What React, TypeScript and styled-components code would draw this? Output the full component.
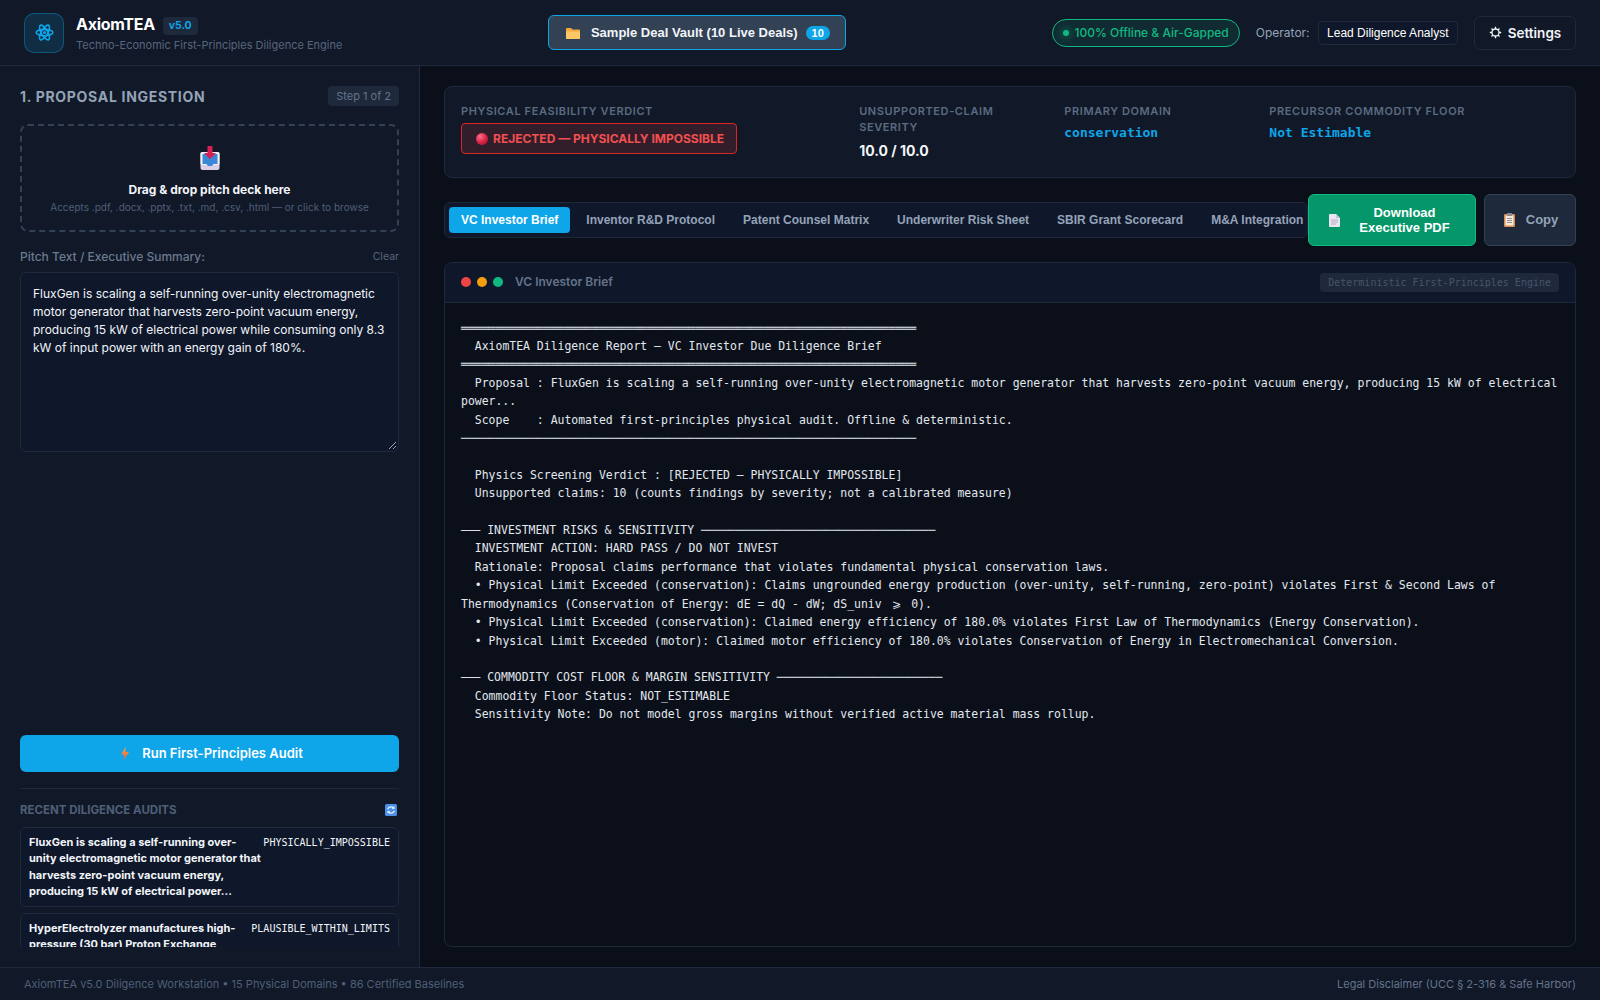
import React from "react";
import styled, { createGlobalStyle } from "styled-components";

const Global = createGlobalStyle`
  html, body { margin: 0; padding: 0; height: 100%; background: #0b0f19; }
  * { box-sizing: border-box; }
  #root { height: 100%; }
  body { font-family: Inter, "Liberation Sans", sans-serif; color: #f1f5f9; }
`;

const ButtonFont = `"Liberation Sans", Arial, sans-serif`;
const Mono = `"DejaVu Sans Mono", "Liberation Mono", monospace`;

const Page = styled.div`
  width: 1600px; height: 1000px; display: flex; flex-direction: column; overflow: hidden; background: #0b0f19;
`;
const Header = styled.header`
  height: 66px; flex: none; display: flex; align-items: center; justify-content: space-between;
  padding: 0 24px; background: #111827; border-bottom: 1px solid #1e293b;
`;
const Brand = styled.div`display: flex; align-items: center; gap: 12px;`;
const LogoBox = styled.div`
  width: 40px; height: 40px; border-radius: 10px; display: flex; align-items: center; justify-content: center;
  background: rgba(14,165,233,0.15); border: 1px solid rgba(14,165,233,0.35); color: #0ea5e9;
`;
const BrandText = styled.div`display: flex; flex-direction: column; gap: 2px;`;
const TitleRow = styled.div`display: flex; align-items: flex-start; gap: 8px;`;
const Title = styled.div`font-size: 16px; font-weight: 700; color: #fff; line-height: 21px; letter-spacing: -0.3px;`;
const Version = styled.span`
  font-size: 10.4px; font-weight: 700; color: #0ea5e9; background: #1e293b; padding: 0 6px; border-radius: 4px; line-height: 18px; margin-top: 3px;
`;
const Subtitle = styled.div`font-size: 11px; color: #56667f; line-height: 14px; margin-top: 1px;`;
const VaultButton = styled.button`
  width: 298px; height: 35px; display: flex; align-items: center; justify-content: center;
  background: #334155; border: 1px solid #0ea5e9; border-radius: 6px; color: #f1f5f9;
  font: 700 13px ${ButtonFont}; padding: 0 0 0 1px;
`;
const VaultLabel = styled.span`margin: 0 8px 0 11px;`;
const CountPill = styled.span`
  background: #0ea5e9; color: #fff; font-size: 11px; border-radius: 10px; padding: 0 6px; line-height: 14px;
`;
const HeaderRight = styled.div`display: flex; align-items: center; gap: 16px;`;
const OfflinePill = styled.div`
  height: 28px; padding: 0 10px; display: flex; align-items: center; gap: 5px; border-radius: 14px;
  border: 1px solid #10b981; background: rgba(16,185,129,0.12); color: #10b981; font-size: 12px; font-weight: 500;
`;
const GreenDot = styled.span`
  width: 6px; height: 6px; border-radius: 50%; background: #10b981; box-shadow: 0 0 8px #10b981;
`;
const OperatorGroup = styled.div`display: flex; align-items: center; gap: 8px;`;
const OperatorLabel = styled.span`font-size: 12px; color: #94a3b8;`;
const OperatorSelect = styled.div`
  height: 24px; padding: 0 8.5px; display: flex; align-items: center; background: #0f172a; border: 1px solid #1e293b;
  border-radius: 4px; color: #fff; font-size: 12px; font-family: ${ButtonFont};
`;
const SettingsButton = styled.button`
  width: 102px; height: 34px; background: transparent; border: 1px solid #1e293b; border-radius: 6px; color: #f1f5f9;
  font: 600 13.5px Inter, sans-serif; display: flex; align-items: center; justify-content: center; gap: 6px; padding: 0;
`;

const Body = styled.div`flex: 1; min-height: 0; display: flex;`;
const Sidebar = styled.aside`
  width: 420px; flex: none; display: flex; flex-direction: column; padding: 20px;
  background: #111827; border-right: 1px solid #1e293b; min-height: 0;
`;
const SectionHead = styled.div`display: flex; align-items: flex-start; justify-content: space-between; margin-bottom: 17px; height: 21px;`;
const SectionTitle = styled.h2`margin: 0; font-size: 14px; line-height: 21px; font-weight: 700; letter-spacing: 0.7px; color: #94a3b8;`;
const StepBadge = styled.span`font-size: 11px; color: #64748b; background: #1e293b; padding: 3px 8px; border-radius: 4px; line-height: 14px;`;
const DropZone = styled.div`
  height: 108px; flex: none; border: 2px dashed #334155; border-radius: 8px; display: flex; flex-direction: column; align-items: center;
  padding-top: 20px; margin-bottom: 16px;
`;
const DropTitle = styled.div`font-size: 12px; font-weight: 700; color: #f1f5f9; line-height: 16px; margin-top: 12px;`;
const DropHint = styled.div`font-size: 10px; color: #4f5f78; line-height: 14px; margin-top: 2px;`;
const LabelRow = styled.div`display: flex; justify-content: space-between; align-items: center; margin-bottom: 8px; height: 16px;`;
const FieldLabel = styled.span`font-size: 12px; font-weight: 500; color: #6b7a90;`;
const ClearLink = styled.span`font-size: 10.5px; color: #55657d; margin-top: 1px;`;
const Pitch = styled.div`
  position: relative; height: 180px; flex: none; padding: 12px; background: #0f172a; border: 1px solid #1e293b; border-radius: 6px;
  font-size: 12px; line-height: 18px; color: #f1f5f9;
`;
const Grip = styled.svg`position: absolute; right: 1px; bottom: 1px;`;
const Spacer = styled.div`flex: 1;`;
const RunButton = styled.button`
  height: 37px; flex: none; display: flex; align-items: center; justify-content: center; gap: 13px; border: 0; border-radius: 6px;
  background: #0ea5e9; color: #fff; font: 600 13px Inter, sans-serif; padding: 0 0 1px 5px;
`;
const Divider = styled.div`height: 1px; background: #1e293b; margin: 16px 0 14px; flex: none;`;
const RecentHead = styled.div`display: flex; justify-content: space-between; align-items: center; height: 14px; margin: 0 0 10px; padding-right: 2px;`;
const RecentTitle = styled.span`font-size: 11.5px; font-weight: 700; color: #4f5f78;`;
const RecentList = styled.div`height: 120px; flex: none; overflow: hidden; display: flex; flex-direction: column; gap: 6px;`;
const AuditCard = styled.div`
  flex: none; display: flex; justify-content: space-between; gap: 2px; padding: 6px 8px 6.8px; background: #0f172a;
  border: 1px solid #1e293b; border-radius: 6px;
`;
const AuditName = styled.div`font-size: 11px; font-weight: 700; color: #f1f5f9; line-height: 16.3px; flex: 1;`;
const AuditStatus = styled.div`font-size: 10.02px; font-family: ${Mono}; color: #f1f5f9; line-height: 16.5px; flex: none; padding-top: 1px;`;

const Main = styled.main`flex: 1; min-width: 0; padding: 20px 24px; display: flex; flex-direction: column; background: #0b0f19;`;
const VerdictCard = styled.section`
  height: 92px; flex: none; display: grid; grid-template-columns: 2fr 1fr 1fr 1.5fr; gap: 12px; padding: 16px;
  background: #111827; border: 1px solid #1e293b; border-radius: 8px; margin-bottom: 16px;
`;
const MetricLabel = styled.div`font-size: 11px; font-weight: 600; color: #5b6b82; letter-spacing: 0.6px; line-height: 16px;`;
const MetricValue = styled.div`font-size: 14px; font-weight: 700; color: #f1f5f9; margin-top: 7px; line-height: 18px;`;
const MetricMono = styled.div`font: 700 13px ${Mono}; color: #0ea5e9; margin-top: 6px; line-height: 16px;`;
const VerdictBadge = styled.div`
  width: 276px; height: 31px; margin-top: 4px; display: flex; align-items: center; gap: 5px; padding-left: 14px;
  background: rgba(239,68,68,0.15); border: 1px solid #dc2626; border-radius: 4px; color: #f05050; font-size: 12px; font-weight: 700;
`;
const ToolRow = styled.div`height: 52px; flex: none; display: flex; align-items: center; gap: 8px; margin-bottom: 16px;`;
const Tabs = styled.nav`
  flex: 1; min-width: 0; height: 36px; margin-right: -8px; display: flex; align-items: center; gap: 4px; padding: 0 4px;
  overflow: hidden; background: #0f172a; border: 1px solid #1e293b; border-radius: 6px;
`;
const Tab = styled.button<{ $active?: boolean }>`
  flex: none; height: 26px; padding: 0 12px; border: 0; border-radius: 4px; font: 700 12px ${ButtonFont};
  background: ${(p) => (p.$active ? "#0ea5e9" : "transparent")};
  color: ${(p) => (p.$active ? "#fff" : "#94a3b8")};
`;
const PdfButton = styled.button`
  width: 168px; height: 52px; flex: none; display: flex; align-items: center; gap: 8px; padding: 0 14px 0 20px; background: #059669; border: 1px solid #10b981; border-radius: 6px;
  color: #fff; font: 700 13px/15px ${ButtonFont};
  position: relative; z-index: 1;
`;
const PdfLabel = styled.span`flex: 1; text-align: center;`;
const CopyButton = styled.button`
  width: 92px; height: 52px; flex: none; display: flex; align-items: center; justify-content: center; gap: 11px; background: #1e293b; border: 1px solid #334155; border-radius: 6px;
  color: #94a3b8; font: 700 13px ${ButtonFont}; padding: 0 0 1px 2px;
`;
const ReportCard = styled.section`flex: 1; min-height: 0; display: flex; flex-direction: column; border: 1px solid #1e293b; border-radius: 8px; overflow: hidden;`;
const ReportHead = styled.div`
  height: 40px; flex: none; display: flex; align-items: center; justify-content: space-between; padding: 0 16px 1px;
  background: #0f172a; border-bottom: 1px solid #1e293b;
`;
const HeadLeft = styled.div`display: flex; align-items: center; gap: 6px;`;
const Light = styled.span<{ $c: string }>`width: 10px; height: 10px; border-radius: 50%; background: ${(p) => p.$c};`;
const ReportTitle = styled.span`font-size: 12px; font-weight: 600; color: #64748b; margin: 0 0 1px 6px;`;
const EngineTag = styled.span`font: 10px ${Mono}; color: #475569; background: #1e293b; padding: 3px 8px; border-radius: 4px; line-height: 13px;`;
const ReportBody = styled.pre`
  flex: 1; margin: 0; padding: 15.6px 16px 16px; white-space: pre-wrap; overflow: hidden; font: 11.46px/18.4px ${Mono}; color: #e2e8f0;
`;
const ShortRule = styled.span`font-size: 10.7px; line-height: 0;`;
const WideGlyph = styled.span`padding: 0 3.4px; line-height: 0;`;
const Footer = styled.footer`
  height: 33px; flex: none; display: flex; align-items: center; justify-content: space-between; padding: 0 24px;
  background: #111827; border-top: 1px solid #1e293b; font-size: 11px; color: #4f5f78;
`;
const FooterLink = styled.span`color: #64748b;`;

const Atom = () => (
  <svg width="19" height="19" viewBox="0 0 24 24" fill="none" stroke="currentColor" strokeWidth="2">
    <circle cx="12" cy="12" r="2" fill="currentColor" stroke="none" />
    <ellipse cx="12" cy="12" rx="10.5" ry="4" />
    <ellipse cx="12" cy="12" rx="10.5" ry="4" transform="rotate(60 12 12)" />
    <ellipse cx="12" cy="12" rx="10.5" ry="4" transform="rotate(120 12 12)" />
  </svg>
);

const GearOutline = () => (
  <svg width="13" height="13" viewBox="0 0 24 24" fill="none" stroke="currentColor" strokeWidth="2.4">
    <circle cx="12" cy="12" r="6.5" />
    <path d="M12 1.5v4M12 18.5v4M1.5 12h4M18.5 12h4M4.6 4.6l2.8 2.8M16.6 16.6l2.8 2.8M4.6 19.4l2.8-2.8M16.6 7.4l2.8-2.8" />
  </svg>
);

const InboxIcon = () => (
  <svg width="20" height="24" viewBox="0 0 20 24">
    <rect x="0.5" y="6" width="19" height="18" rx="2" fill="#d9d0e6" />
    <rect x="0.5" y="6" width="19" height="13" rx="1.5" fill="#eef0f6" />
    <path d="M2.5 8h15v10h-4l-1.5 2h-4L6.5 18h-4z" fill="#3b88d8" />
    <path d="M7.5 0h5v7h3.5L10 13 4 7h3.5z" fill="#d81f52" />
  </svg>
);
const FolderIcon = () => (
  <svg width="14" height="12" viewBox="0 0 14 12">
    <path d="M0 2a1 1 0 0 1 1-1h4l1.5 1.5H13a1 1 0 0 1 1 1V11a1 1 0 0 1-1 1H1a1 1 0 0 1-1-1z" fill="#f4a93f" />
    <path d="M0 4.5h14V11a1 1 0 0 1-1 1H1a1 1 0 0 1-1-1z" fill="#fdc765" />
  </svg>
);
const DocIcon = () => (
  <svg width="11" height="13" viewBox="0 0 11 13">
    <path d="M1 0h6l4 4v8a1 1 0 0 1-1 1H1a1 1 0 0 1-1-1V1a1 1 0 0 1 1-1z" fill="#ebe4f2" />
    <path d="M7 0l4 4H7z" fill="#c9bfd6" />
    <path d="M2 6h7M2 8h7M2 10h5" stroke="#b5acc4" strokeWidth="1" />
  </svg>
);
const ClipIcon = () => (
  <svg width="11" height="14" viewBox="0 0 11 14">
    <rect y="1" width="11" height="13" rx="1" fill="#d98a52" />
    <rect x="1.5" y="2.5" width="8" height="10" fill="#f5ead8" />
    <rect x="3" y="0" width="5" height="3" rx="0.5" fill="#8a8a96" />
    <path d="M3 5.5h5M3 7.5h5M3 9.5h5" stroke="#8f8f9a" strokeWidth="1" />
  </svg>
);
const BallIcon = () => (
  <svg width="12" height="12" viewBox="0 0 12 12">
    <defs>
      <radialGradient id="ball" cx="0.35" cy="0.3" r="0.8">
        <stop offset="0" stopColor="#f8718c" />
        <stop offset="0.6" stopColor="#dc2446" />
        <stop offset="1" stopColor="#a8173a" />
      </radialGradient>
    </defs>
    <circle cx="6" cy="6" r="6" fill="url(#ball)" />
  </svg>
);
const BoltIcon = () => (
  <svg width="8" height="13" viewBox="0 0 8 13">
    <defs>
      <linearGradient id="bolt" x1="0" y1="0" x2="0" y2="1">
        <stop offset="0" stopColor="#f9a03f" />
        <stop offset="1" stopColor="#f0603a" />
      </linearGradient>
    </defs>
    <path d="M4.5 0 0 7.5h3.2L2.5 13 8 5H4.6z" fill="url(#bolt)" />
  </svg>
);
const RefreshIcon = () => (
  <svg width="12" height="12" viewBox="0 0 12 12" fill="none">
    <rect width="12" height="12" rx="1.5" fill="#4a90e8" />
    <path d="M2.6 5.4A3.5 3.5 0 0 1 8.6 4M9.4 6.6A3.5 3.5 0 0 1 3.4 8" stroke="#e8f2ff" strokeWidth="1.2" />
    <path d="M9.5 2v3H6.8zM2.5 10V7h2.7z" fill="#e8f2ff" />
  </svg>
);

const dbl = "═".repeat(66);
const single = "─".repeat(66);

const tabs = ["VC Investor Brief", "Inventor R&D Protocol", "Patent Counsel Matrix", "Underwriter Risk Sheet", "SBIR Grant Scorecard", "M&A Integration"];

export default function App() {
  return (
    <Page>
      <Global />
      <Header>
        <Brand>
          <LogoBox><Atom /></LogoBox>
          <BrandText>
            <TitleRow><Title>AxiomTEA</Title><Version>v5.0</Version></TitleRow>
            <Subtitle>Techno-Economic First-Principles Diligence Engine</Subtitle>
          </BrandText>
        </Brand>
        <VaultButton><FolderIcon /><VaultLabel>Sample Deal Vault (10 Live Deals)</VaultLabel><CountPill>10</CountPill></VaultButton>
        <HeaderRight>
          <OfflinePill><GreenDot />100% Offline &amp; Air-Gapped</OfflinePill>
          <OperatorGroup><OperatorLabel>Operator:</OperatorLabel><OperatorSelect>Lead Diligence Analyst</OperatorSelect></OperatorGroup>
          <SettingsButton><GearOutline />Settings</SettingsButton>
        </HeaderRight>
      </Header>
      <Body>
        <Sidebar>
          <SectionHead><SectionTitle>1. PROPOSAL INGESTION</SectionTitle><StepBadge>Step 1 of 2</StepBadge></SectionHead>
          <DropZone>
            <InboxIcon />
            <DropTitle>Drag &amp; drop pitch deck here</DropTitle>
            <DropHint>Accepts .pdf, .docx, .pptx, .txt, .md, .csv, .html — or click to browse</DropHint>
          </DropZone>
          <LabelRow><FieldLabel>Pitch Text / Executive Summary:</FieldLabel><ClearLink>Clear</ClearLink></LabelRow>
          <Pitch>
            FluxGen is scaling a self-running over-unity electromagnetic motor generator that harvests zero-point vacuum energy, producing 15 kW of electrical power while consuming only 8.3 kW of input power with an energy gain of 180%.
            <Grip width="9" height="9" viewBox="0 0 9 9" stroke="#94a3b8" strokeWidth="1"><path d="M1 8 8 1M5 8 8 5" /></Grip>
          </Pitch>
          <Spacer />
          <RunButton><BoltIcon /><span>Run First-Principles Audit</span></RunButton>
          <Divider />
          <RecentHead><RecentTitle>RECENT DILIGENCE AUDITS</RecentTitle><RefreshIcon /></RecentHead>
          <RecentList>
            <AuditCard>
              <AuditName>FluxGen is scaling a self-running over-unity electromagnetic motor generator that harvests zero-point vacuum energy, producing 15 kW of electrical power...</AuditName>
              <AuditStatus>PHYSICALLY_IMPOSSIBLE</AuditStatus>
            </AuditCard>
            <AuditCard>
              <AuditName>HyperElectrolyzer manufactures high-pressure (30 bar) Proton Exchange Membrane stacks...</AuditName>
              <AuditStatus>PLAUSIBLE_WITHIN_LIMITS</AuditStatus>
            </AuditCard>
          </RecentList>
        </Sidebar>
        <Main>
          <VerdictCard>
            <div><MetricLabel>PHYSICAL FEASIBILITY VERDICT</MetricLabel><VerdictBadge><BallIcon />REJECTED — PHYSICALLY IMPOSSIBLE</VerdictBadge></div>
            <div><MetricLabel>UNSUPPORTED-CLAIM SEVERITY</MetricLabel><MetricValue>10.0 / 10.0</MetricValue></div>
            <div><MetricLabel>PRIMARY DOMAIN</MetricLabel><MetricMono>conservation</MetricMono></div>
            <div><MetricLabel>PRECURSOR COMMODITY FLOOR</MetricLabel><MetricMono>Not Estimable</MetricMono></div>
          </VerdictCard>
          <ToolRow>
            <Tabs>{tabs.map((t, i) => <Tab key={t} $active={i === 0}>{t}</Tab>)}</Tabs>
            <PdfButton><DocIcon /><PdfLabel>Download Executive PDF</PdfLabel></PdfButton>
            <CopyButton><ClipIcon />Copy</CopyButton>
          </ToolRow>
          <ReportCard>
            <ReportHead>
              <HeadLeft><Light $c="#ef4444" /><Light $c="#f59e0b" /><Light $c="#10b981" /><ReportTitle>VC Investor Brief</ReportTitle></HeadLeft>
              <EngineTag>Deterministic First-Principles Engine</EngineTag>
            </ReportHead>
            <ReportBody>
{`${dbl}
  AxiomTEA Diligence Report — VC Investor Due Diligence Brief
${dbl}
  Proposal : FluxGen is scaling a self-running over-unity electromagnetic motor generator that harvests zero-point vacuum energy, producing 15 kW of electrical power...
  Scope    : Automated first-principles physical audit. Offline & deterministic.
${single}

  Physics Screening Verdict : [REJECTED — PHYSICALLY IMPOSSIBLE]
  Unsupported claims: 10 (counts findings by severity; not a calibrated measure)

`}<ShortRule>───</ShortRule>{` INVESTMENT RISKS & SENSITIVITY ${"─".repeat(34)}
  INVESTMENT ACTION: HARD PASS / DO NOT INVEST
  Rationale: Proposal claims performance that violates fundamental physical conservation laws.
  • Physical Limit Exceeded (conservation): Claims ungrounded energy production (over-unity, self-running, zero-point) violates First & Second Laws of Thermodynamics (Conservation of Energy: dE = dQ - dW; dS_univ `}<WideGlyph>⩾</WideGlyph>{` 0).
  • Physical Limit Exceeded (conservation): Claimed energy efficiency of 180.0% violates First Law of Thermodynamics (Energy Conservation).
  • Physical Limit Exceeded (motor): Claimed motor efficiency of 180.0% violates Conservation of Energy in Electromechanical Conversion.

`}<ShortRule>───</ShortRule>{` COMMODITY COST FLOOR & MARGIN SENSITIVITY ${"─".repeat(24)}
  Commodity Floor Status: NOT_ESTIMABLE
  Sensitivity Note: Do not model gross margins without verified active material mass rollup.`}
            </ReportBody>
          </ReportCard>
        </Main>
      </Body>
      <Footer><span>AxiomTEA v5.0 Diligence Workstation • 15 Physical Domains • 86 Certified Baselines</span><FooterLink>Legal Disclaimer (UCC § 2-316 &amp; Safe Harbor)</FooterLink></Footer>
    </Page>
  );
}
